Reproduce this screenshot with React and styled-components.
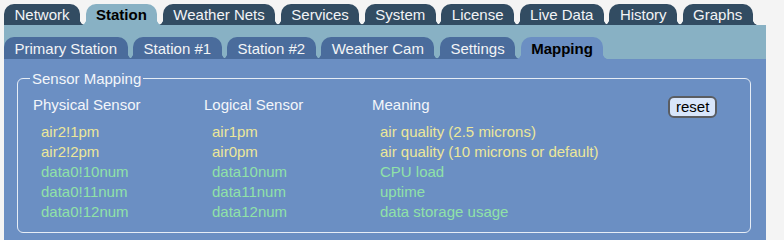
import React from "react";
import styled, { createGlobalStyle, css } from "styled-components";

const Global = createGlobalStyle`
  html, body { margin: 0; padding: 0; background: #f4f4f4; overflow: hidden; }
  body { font-family: "Liberation Sans", Arial, sans-serif; font-size: 15px; }
`;

const Page = styled.div`
  width: 762px;
  margin-left: 4px;
  padding-top: 4px;
`;

const TabRow = styled.div`
  display: flex;
  gap: 5.5px;
  align-items: flex-end;
`;

const flare = (color) => css`
  &::before, &::after {
    content: "";
    position: absolute;
    bottom: 0;
    width: 5px;
    height: 5px;
  }
  &::before {
    left: -5px;
    background: radial-gradient(circle at 0 0, transparent 4.6px, ${color} 5.2px);
  }
  &::after {
    right: -5px;
    background: radial-gradient(circle at 100% 0, transparent 4.6px, ${color} 5.2px);
  }
  &:first-child::before { display: none; }
`;

const Tab = styled.div`
  position: relative;
  padding: 1px 10.5px 0;
  line-height: ${(p) => p.$h}px;
  border-radius: 10px 10px 0 0;
  white-space: nowrap;
  background: ${(p) => (p.$active ? p.$activeColor : p.$color)};
  color: ${(p) => (p.$active ? "#000" : "#f2f4f6")};
  font-weight: ${(p) => (p.$active ? "bold" : "normal")};
  z-index: ${(p) => (p.$active ? 2 : 1)};
  ${(p) => flare(p.$active ? p.$activeColor : p.$color)}
`;

const Band = styled.div`
  background: #88b1c4;
  padding-top: 12px;
`;

const Panel = styled.div`
  background: #6b8fc3;
  padding: 11px 15px 40px 13px;
`;

const Fieldset = styled.fieldset`
  margin: 0;
  border: 1px solid #e6edf6;
  border-radius: 6px;
  padding: 8px 14px 10px 15px;
  color: #f3f6fa;
`;

const Legend = styled.legend`
  padding: 0 2px;
  margin-left: -3px;
  color: #f3f6fa;
  line-height: 17px;
`;

const Grid = styled.div`
  display: grid;
  grid-template-columns: 171px 168px 296px auto;
  line-height: 20px;
`;

const Head = styled.div`
  color: #f3f6fa;
  padding-bottom: 7px;
`;

const Cell = styled.div`
  padding-left: 8px;
  color: ${(p) => p.$color};
  white-space: nowrap;
`;

const ResetButton = styled.button`
  justify-self: start;
  align-self: start;
  margin-top: 1px;
  font-family: "Liberation Sans", Arial, sans-serif;
  font-size: 15px;
  line-height: 18px;
  padding: 0 6px;
  border: 2px solid #5a5d62;
  border-radius: 6px;
  background: #d8e6fb;
  color: #000;
`;

const topTabs = ["Network", "Station", "Weather Nets", "Services", "System", "License", "Live Data", "History", "Graphs"];
const subTabs = ["Primary Station", "Station #1", "Station #2", "Weather Cam", "Settings", "Mapping"];

const YELLOW = "#ece79a";
const GREEN = "#90e2a8";

const rows = [
  ["air2!1pm", "air1pm", "air quality (2.5 microns)", YELLOW],
  ["air2!2pm", "air0pm", "air quality (10 microns or default)", YELLOW],
  ["data0!10num", "data10num", "CPU load", GREEN],
  ["data0!11num", "data11num", "uptime", GREEN],
  ["data0!12num", "data12num", "data storage usage", GREEN],
];

export default function App() {
  return (
    <>
      <Global />
      <Page>
        <TabRow>
          {topTabs.map((t) => (
            <Tab key={t} $h={20} $color="#324c62" $activeColor="#88b1c4" $active={t === "Station"}>
              {t}
            </Tab>
          ))}
        </TabRow>
        <Band>
          <TabRow>
            {subTabs.map((t) => (
              <Tab key={t} $h={21} $color="#4a6c9c" $activeColor="#6b8fc3" $active={t === "Mapping"}>
                {t}
              </Tab>
            ))}
          </TabRow>
        </Band>
        <Panel>
          <Fieldset>
            <Legend>Sensor Mapping</Legend>
            <Grid>
              <Head>Physical Sensor</Head>
              <Head>Logical Sensor</Head>
              <Head>Meaning</Head>
              <ResetButton>reset</ResetButton>
              {rows.map(([a, b, c, col]) => (
                <React.Fragment key={a}>
                  <Cell $color={col}>{a}</Cell>
                  <Cell $color={col}>{b}</Cell>
                  <Cell $color={col}>{c}</Cell>
                  <div />
                </React.Fragment>
              ))}
            </Grid>
          </Fieldset>
        </Panel>
      </Page>
    </>
  );
}
